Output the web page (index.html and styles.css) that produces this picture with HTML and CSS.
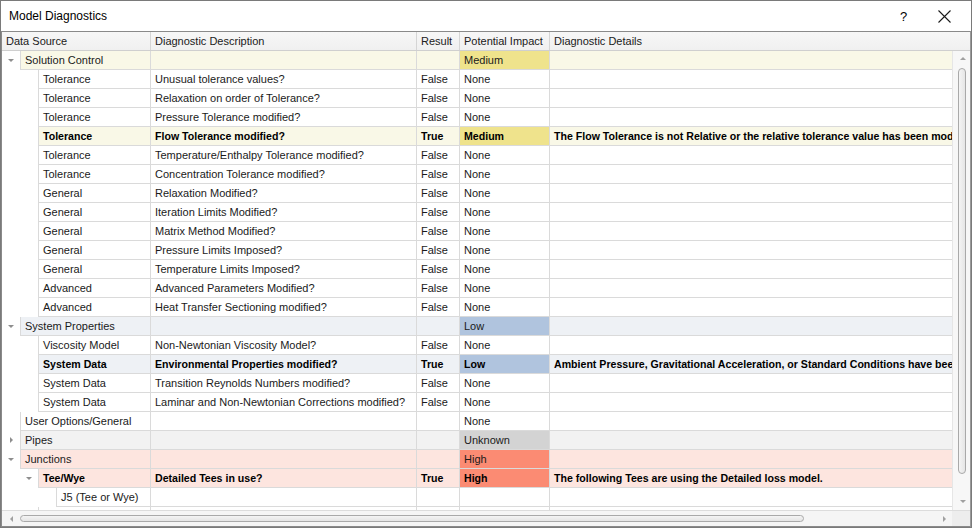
FILE: index.html
```html
<!DOCTYPE html>
<html>
<head>
<meta charset="utf-8">
<link rel="stylesheet" href="styles.css">
</head>
<body>
<div class="window">
  <div class="titlebar">
    <span class="title">Model Diagnostics</span>
    <span class="help">?</span>
    <svg class="close" width="13" height="13" viewBox="0 0 13 13"><path d="M0.5 0.5 L12.5 12.5 M12.5 0.5 L0.5 12.5" stroke="#1a1a1a" stroke-width="1.1" fill="none"/></svg>
  </div>
  <div class="grid">
    <div class="header">
      <div class="h h1">Data Source</div>
      <div class="h h2">Diagnostic Description</div>
      <div class="h h3">Result</div>
      <div class="h h4">Potential Impact</div>
      <div class="h h5">Diagnostic Details</div>
    </div>
    <div class="body">
      <div class="rows">
        <div class="row l0 yellow"><div class="ind"><span class="exp down"></span></div><div class="cells"><div class="c c1">Solution Control</div><div class="c c2"></div><div class="c c3"></div><div class="c c4 medium">Medium</div><div class="c c5"></div></div></div>
        <div class="row l1"><div class="ind"></div><div class="cells"><div class="c c1">Tolerance</div><div class="c c2">Unusual tolerance values?</div><div class="c c3">False</div><div class="c c4">None</div><div class="c c5"></div></div></div>
        <div class="row l1"><div class="ind"></div><div class="cells"><div class="c c1">Tolerance</div><div class="c c2">Relaxation on order of Tolerance?</div><div class="c c3">False</div><div class="c c4">None</div><div class="c c5"></div></div></div>
        <div class="row l1"><div class="ind"></div><div class="cells"><div class="c c1">Tolerance</div><div class="c c2">Pressure Tolerance modified?</div><div class="c c3">False</div><div class="c c4">None</div><div class="c c5"></div></div></div>
        <div class="row l1 yellow bold"><div class="ind"></div><div class="cells"><div class="c c1">Tolerance</div><div class="c c2">Flow Tolerance modified?</div><div class="c c3">True</div><div class="c c4 medium">Medium</div><div class="c c5">The Flow Tolerance is not Relative or the relative tolerance value has been modified from the default value.</div></div></div>
        <div class="row l1"><div class="ind"></div><div class="cells"><div class="c c1">Tolerance</div><div class="c c2">Temperature/Enthalpy Tolerance modified?</div><div class="c c3">False</div><div class="c c4">None</div><div class="c c5"></div></div></div>
        <div class="row l1"><div class="ind"></div><div class="cells"><div class="c c1">Tolerance</div><div class="c c2">Concentration Tolerance modified?</div><div class="c c3">False</div><div class="c c4">None</div><div class="c c5"></div></div></div>
        <div class="row l1"><div class="ind"></div><div class="cells"><div class="c c1">General</div><div class="c c2">Relaxation Modified?</div><div class="c c3">False</div><div class="c c4">None</div><div class="c c5"></div></div></div>
        <div class="row l1"><div class="ind"></div><div class="cells"><div class="c c1">General</div><div class="c c2">Iteration Limits Modified?</div><div class="c c3">False</div><div class="c c4">None</div><div class="c c5"></div></div></div>
        <div class="row l1"><div class="ind"></div><div class="cells"><div class="c c1">General</div><div class="c c2">Matrix Method Modified?</div><div class="c c3">False</div><div class="c c4">None</div><div class="c c5"></div></div></div>
        <div class="row l1"><div class="ind"></div><div class="cells"><div class="c c1">General</div><div class="c c2">Pressure Limits Imposed?</div><div class="c c3">False</div><div class="c c4">None</div><div class="c c5"></div></div></div>
        <div class="row l1"><div class="ind"></div><div class="cells"><div class="c c1">General</div><div class="c c2">Temperature Limits Imposed?</div><div class="c c3">False</div><div class="c c4">None</div><div class="c c5"></div></div></div>
        <div class="row l1"><div class="ind"></div><div class="cells"><div class="c c1">Advanced</div><div class="c c2">Advanced Parameters Modified?</div><div class="c c3">False</div><div class="c c4">None</div><div class="c c5"></div></div></div>
        <div class="row l1"><div class="ind"></div><div class="cells"><div class="c c1">Advanced</div><div class="c c2">Heat Transfer Sectioning modified?</div><div class="c c3">False</div><div class="c c4">None</div><div class="c c5"></div></div></div>
        <div class="row l0 blue"><div class="ind"><span class="exp down"></span></div><div class="cells"><div class="c c1">System Properties</div><div class="c c2"></div><div class="c c3"></div><div class="c c4 low">Low</div><div class="c c5"></div></div></div>
        <div class="row l1"><div class="ind"></div><div class="cells"><div class="c c1">Viscosity Model</div><div class="c c2">Non-Newtonian Viscosity Model?</div><div class="c c3">False</div><div class="c c4">None</div><div class="c c5"></div></div></div>
        <div class="row l1 blue bold"><div class="ind"></div><div class="cells"><div class="c c1">System Data</div><div class="c c2">Environmental Properties modified?</div><div class="c c3">True</div><div class="c c4 low">Low</div><div class="c c5">Ambient Pressure, Gravitational Acceleration, or Standard Conditions have been modified.</div></div></div>
        <div class="row l1"><div class="ind"></div><div class="cells"><div class="c c1">System Data</div><div class="c c2">Transition Reynolds Numbers modified?</div><div class="c c3">False</div><div class="c c4">None</div><div class="c c5"></div></div></div>
        <div class="row l1"><div class="ind"></div><div class="cells"><div class="c c1">System Data</div><div class="c c2">Laminar and Non-Newtonian Corrections modified?</div><div class="c c3">False</div><div class="c c4">None</div><div class="c c5"></div></div></div>
        <div class="row l0"><div class="ind"></div><div class="cells"><div class="c c1">User Options/General</div><div class="c c2"></div><div class="c c3"></div><div class="c c4">None</div><div class="c c5"></div></div></div>
        <div class="row l0 gray"><div class="ind"><span class="exp right"></span></div><div class="cells"><div class="c c1">Pipes</div><div class="c c2"></div><div class="c c3"></div><div class="c c4 unknown">Unknown</div><div class="c c5"></div></div></div>
        <div class="row l0 pink"><div class="ind"><span class="exp down"></span></div><div class="cells"><div class="c c1">Junctions</div><div class="c c2"></div><div class="c c3"></div><div class="c c4 high">High</div><div class="c c5"></div></div></div>
        <div class="row l1 pink bold"><div class="ind"><span class="exp down"></span></div><div class="cells"><div class="c c1">Tee/Wye</div><div class="c c2">Detailed Tees in use?</div><div class="c c3">True</div><div class="c c4 high">High</div><div class="c c5">The following Tees are using the Detailed loss model.</div></div></div>
        <div class="row l2"><div class="ind"></div><div class="cells"><div class="c c1">J5 (Tee or Wye)</div><div class="c c2"></div><div class="c c3"></div><div class="c c4"></div><div class="c c5"></div></div></div>
        <div class="row l1"><div class="ind"></div><div class="cells"><div class="c c1"></div><div class="c c2"></div><div class="c c3"></div><div class="c c4"></div><div class="c c5"></div></div></div>
      </div>
      <div class="vscroll">
        <span class="arr up"></span>
        <div class="vthumb"></div>
        <span class="arr dn"></span>
      </div>
    </div>
    <div class="bottom">
      <div class="hscroll">
        <span class="arr lf"></span>
        <div class="htrack"><div class="hthumb"></div></div>
        <span class="arr rt"></span>
      </div>
      <div class="corner"></div>
    </div>
  </div>
</div>
</body>
</html>
```

FILE: styles.css
```css
* { box-sizing: border-box; }
html, body { margin: 0; padding: 0; background: #fff; }
body { font-family: "Liberation Sans", Arial, sans-serif; font-size: 11px; color: #1a1a1a; }

.window {
  width: 972px; height: 528px;
  border: 1px solid #7a7a7a;
  display: flex; flex-direction: column;
  background: #fff;
}

.titlebar {
  height: 30px; flex: none;
  display: flex; align-items: center;
  padding-left: 8px;
  font-size: 12px; color: #000;
}
.title { flex: 1; }
.help { width: 10px; font-size: 13px; margin-right: 28px; }
.close { margin-right: 20px; }

.grid {
  flex: 1; min-height: 0;
  border: 1px solid #8a8a8a;
  border-right-color: #9a9a9a;
  display: flex; flex-direction: column;
}

.header {
  height: 19px; flex: none;
  display: flex;
  background: linear-gradient(#f7f7f7, #f0f0f0);
  border-bottom: 1px solid #cfcfcf;
}
.h { padding-left: 4px; line-height: 18px; border-right: 1px solid #d5d5d5; white-space: nowrap; color: #202020; }
.h1 { width: 149px; }
.h2 { width: 266px; }
.h3 { width: 43px; }
.h4 { width: 90px; }
.h5 { flex: 1; border-right: none; }

.body { flex: 1; min-height: 0; display: flex; overflow: hidden; }
.rows { width: 950px; flex: none; overflow: hidden; display: flex; flex-direction: column; }

.row { display: flex; height: 19px; flex: none; }
.ind { flex: none; position: relative; }
.l0 .ind { width: 18px; }
.l1 .ind { width: 36px; }
.l2 .ind { width: 54px; }

.cells {
  flex: 1; min-width: 0; display: flex;
  border-left: 1px solid #dadada;
  border-bottom: 1px solid #dadada;
}
.c { padding-left: 4px; line-height: 18px; white-space: nowrap; overflow: hidden; border-right: 1px solid #dadada; }
.c1 { flex: 1; min-width: 0; }
.c2 { width: 266px; flex: none; }
.c3 { width: 43px; flex: none; }
.c4 { width: 90px; flex: none; }
.c5 { width: 402px; flex: none; border-right: none; }

.bold .c { font-weight: bold; color: #000; font-size: 10.6px; }

.yellow .cells { background: #f9f8e7; }
.blue .cells { background: #eef1f5; }
.gray .cells { background: #f2f2f2; }
.pink .cells { background: #fde5df; }

.medium { background: #efe38c; }
.low { background: #b0c4de; }
.unknown { background: #d3d3d3; }
.high { background: #fb8b73; }

.exp { position: absolute; top: 0; right: 0; width: 18px; height: 18px; }
.exp::after { content: ""; position: absolute; }
.exp.down::after {
  left: 6px; top: 8px;
  border-left: 3px solid transparent; border-right: 3px solid transparent;
  border-top: 3px solid #8e8e8e;
}
.exp.right::after {
  left: 8px; top: 6px;
  border-top: 3px solid transparent; border-bottom: 3px solid transparent;
  border-left: 3px solid #8e8e8e;
}

.vscroll {
  flex: 1; background: #f7f7f7;
  border-left: 1px solid #e6e6e6;
  display: flex; flex-direction: column; align-items: center;
  padding: 6px 0 7px;
}
.vthumb {
  width: 8px; flex: 1; margin: 8px 0 26px 1px;
  border: 1px solid #a9a9a9; border-radius: 4px;
  background: linear-gradient(to right, #f4f4f4, #e6e6e6);
}

.arr { flex: none; width: 0; height: 0; }
.arr.up { border-left: 3px solid transparent; border-right: 3px solid transparent; border-bottom: 3px solid #a0a0a0; margin-left: 2px; }
.arr.dn { border-left: 3px solid transparent; border-right: 3px solid transparent; border-top: 3px solid #a0a0a0; margin-left: 2px; }
.arr.lf { border-top: 3px solid transparent; border-bottom: 3px solid transparent; border-right: 3px solid #a0a0a0; }
.arr.rt { border-top: 3px solid transparent; border-bottom: 3px solid transparent; border-left: 3px solid #a0a0a0; }

.bottom { height: 16px; flex: none; display: flex; border-top: 1px solid #dcdcdc; }
.hscroll {
  width: 950px; flex: none; background: #f5f5f5;
  display: flex; align-items: center; padding: 0 6px 0 8px;
}
.htrack { flex: 1; height: 100%; display: flex; align-items: center; padding: 0 0 0 7px; }
.hthumb {
  width: 784px; height: 7px;
  border: 1px solid #a9a9a9; border-radius: 4px;
  background: linear-gradient(#f4f4f4, #e4e4e4);
}
.corner { flex: 1; background: #ededed; }
```
